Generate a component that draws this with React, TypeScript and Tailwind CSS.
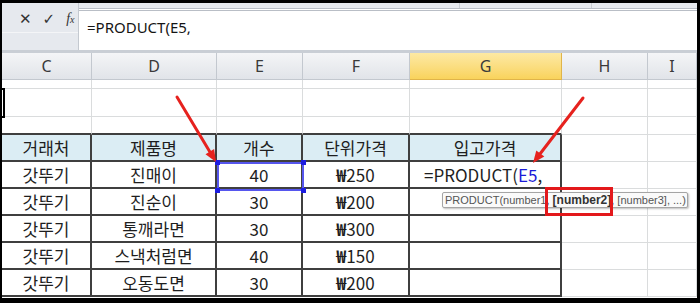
import React from 'react';

const cols = [
    { key: 'C', w: 'w-[90px]' },
    { key: 'D', w: 'w-[125px]' },
    { key: 'E', w: 'w-[86px]' },
    { key: 'F', w: 'w-[107px]' },
    { key: 'G', w: 'w-[152px]' },
    { key: 'H', w: 'w-[86px]' },
    { key: 'I', w: 'w-[49px]' },
];

const rows = [
    ['갓뚜기', '진매이', '40', '₩250', ''],
    ['갓뚜기', '진순이', '30', '₩200', ''],
    ['갓뚜기', '통깨라면', '30', '₩300', ''],
    ['갓뚜기', '스낵처럼면', '40', '₩150', ''],
    ['갓뚜기', '오동도면', '30', '₩200', ''],
];

const kr = "font-['Noto_Sans_CJK_KR','Noto_Sans',sans-serif]";

function EmptyRow({ h, tableBottom }: { h: string; tableBottom?: boolean }) {
    return (
        <div className={`flex ${h}`}>
            {cols.map((c, i) => (
                <div
                    key={c.key}
                    className={`${c.w} h-full border-r border-[#dadcdd] ${
                        tableBottom && i < 5 ? 'border-b-2 border-b-[#3f3f3f]' : 'border-b'
                    }`}
                />
            ))}
        </div>
    );
}

function TableRow({ cells, header, formula }: { cells: string[]; header?: boolean; formula?: boolean }) {
    return (
        <div className={`flex h-[27px] ${kr} text-[17px] text-[#1e1e1e] leading-none`}>
            {cells.map((t, i) => (
                <div
                    key={i}
                    className={`${cols[i].w} h-full border-r-2 border-b-2 border-[#3f3f3f] flex items-center ${
                        header ? 'bg-[#dbedf4]' : 'bg-white'
                    } ${i === 4 && formula ? 'justify-start pl-[14px]' : 'justify-center'}`}
                >
                    {i === 4 && formula ? (
                        <span className="whitespace-nowrap">
                            =PRODUCT(<span className="text-[#1b1bd8]">E5</span>,
                        </span>
                    ) : t.startsWith('₩') ? (
                        <span>
                            <span className="font-bold">₩</span>
                            {t.slice(1)}
                        </span>
                    ) : (
                        t
                    )}
                </div>
            ))}
            <div className="w-[86px] h-full border-r border-b border-[#dadcdd]" />
            <div className="w-[49px] h-full border-r border-b border-[#dadcdd]" />
        </div>
    );
}

export default function App() {
    return (
        <div className="w-[700px] h-[303px] bg-black pt-[3px] pl-[2px] pr-[3px] pb-[5px] relative overflow-hidden">
            <div className="w-[695px] h-[295px] bg-white flex flex-col">
                {/* formula bar */}
                <div className="h-[47px] bg-[#e6e9ee] flex">
                    <div className="w-[77px] h-full flex flex-col border-r border-[#c4c9d0]">
                        <div className="h-[29px] flex items-center gap-[11px] pl-[17px] pt-[3px] text-[#333]">
                            <span className="text-[15px] font-['DejaVu_Sans',sans-serif] font-bold leading-none">✕</span>
                            <span className="text-[15px] font-['DejaVu_Sans',sans-serif] font-bold leading-none">✓</span>
                            <span className="text-[14px] italic font-['Liberation_Serif',serif] leading-none">
                                f<span className="text-[10px]">x</span>
                            </span>
                        </div>
                        <div className="flex-1 border-t border-[#f4f5f7]" />
                    </div>
                    <div className="flex-1 flex flex-col">
                        <div className="h-[5px] flex">
                            <div className="w-[381px] border-r border-[#c9cdd3]" />
                            <div className="w-[132px] border-r border-[#c9cdd3]" />
                        </div>
                        <div className="flex-1 bg-white border-t-[3px] border-double border-[#b9bec6] pl-[8px] pt-[4px]">
                            <span className="text-[15px] text-[#151515] font-['Noto_Sans',sans-serif] leading-none">
                                =PRODUCT(E5,
                            </span>
                        </div>
                    </div>
                </div>
                <div className="h-[3px] bg-[#c9ced5]" />
                {/* column headers */}
                <div className="flex h-[27px] font-['Noto_Sans',sans-serif] text-[16px] text-[#3a3a3a]">
                    {cols.map((c) => (
                        <div
                            key={c.key}
                            className={`${c.w} h-full flex items-center justify-center border-r border-b ${
                                c.key === 'G'
                                    ? 'bg-gradient-to-b from-[#fde9a3] to-[#f9d35b] border-[#e0b449]'
                                    : 'bg-gradient-to-b from-[#f4f5f7] to-[#e1e4e9] border-[#c3c8cf]'
                            }`}
                        >
                            {c.key}
                        </div>
                    ))}
                </div>
                <EmptyRow h="h-[9px]" />
                <EmptyRow h="h-[28px]" />
                <EmptyRow h="h-[18px]" tableBottom />
                <TableRow cells={['거래처', '제품명', '개수', '단위가격', '입고가격']} header />
                {rows.map((r, i) => (
                    <TableRow key={i} cells={r} formula={i === 0} />
                ))}
            </div>

            {/* left edge marker */}
            <div className="absolute left-0 top-[88px] w-[5px] h-[30px] border-2 border-black" />

            {/* E5 selection */}
            <div className="absolute left-[217px] top-[162px] w-[87px] h-[29px] border-2 border-[#5656ee]" />
            <div className="absolute left-[215px] top-[160px] w-[5px] h-[5px] bg-[#1d1de0]" />
            <div className="absolute left-[301px] top-[160px] w-[5px] h-[5px] bg-[#1d1de0]" />
            <div className="absolute left-[215px] top-[188px] w-[5px] h-[5px] bg-[#1d1de0]" />
            <div className="absolute left-[301px] top-[188px] w-[5px] h-[5px] bg-[#1d1de0]" />

            {/* function tooltip */}
            <div className="absolute left-[442px] top-[192px] w-[246px] h-[16px] bg-[#fafafa] border border-[#a5a5a5] rounded-[2px] shadow-[1px_1px_2px_rgba(0,0,0,0.25)] flex items-center pl-[2px] font-['Liberation_Sans',sans-serif] text-[11px] leading-none text-[#555] whitespace-nowrap">
                PRODUCT(number1,&nbsp;<span className="font-bold text-[12px] text-[#333]">[number2]</span>, [number3], ...)
            </div>
            <div className="absolute left-[545px] top-[187px] w-[68px] h-[29px] border-[3px] border-[#e3181b]" />

            {/* arrows */}
            <svg className="absolute left-0 top-0 pointer-events-none" width="700" height="303" viewBox="0 0 700 303">
                <line x1="177" y1="97" x2="209.8" y2="151.7" stroke="#e6221e" strokeWidth="3" strokeLinecap="round" />
                <polygon points="216,162 205.5,154.3 214.1,149.1" fill="#e6221e" />
                <line x1="583" y1="98" x2="540.3" y2="153.5" stroke="#e6221e" strokeWidth="3" strokeLinecap="round" />
                <polygon points="533,163 536.3,150.5 544.3,156.5" fill="#e6221e" />
            </svg>
        </div>
    );
}
